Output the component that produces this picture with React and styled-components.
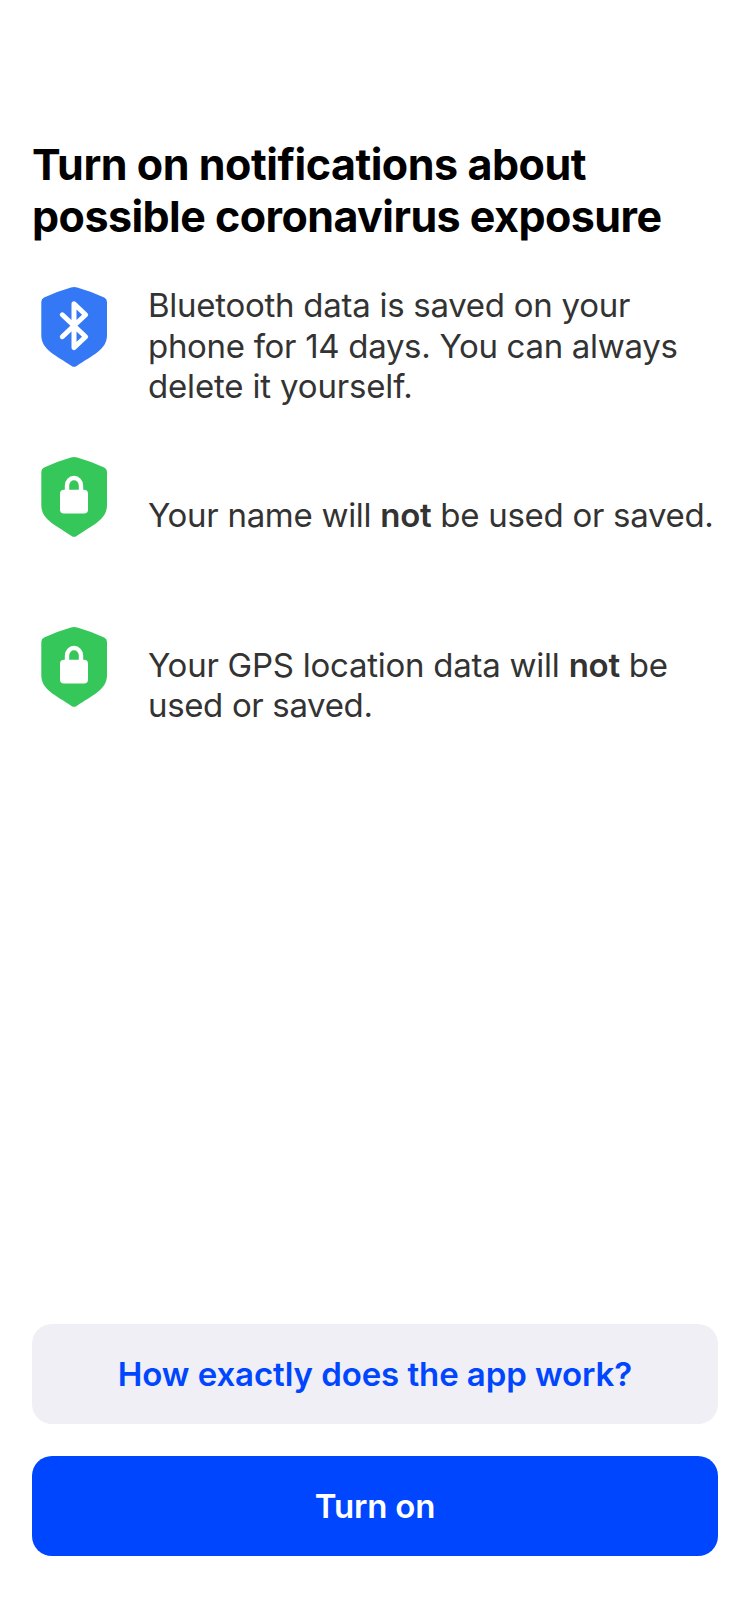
import React from "react";
import styled, { createGlobalStyle } from "styled-components";

const GlobalStyle = createGlobalStyle`
  body { margin: 0; background: #fff; }
  * { box-sizing: border-box; }
`;

const Screen = styled.main`
  display: flex;
  flex-direction: column;
  width: 750px;
  height: 1624px;
  padding: 138px 32px 68px;
  background: #fff;
  font-family: Inter, "Liberation Sans", sans-serif;
`;

const Title = styled.h1`
  margin: 0;
  color: #000;
  font-size: 43px;
  font-weight: 700;
  line-height: 52px;
  white-space: nowrap;
`;

const Line = styled.span`
  display: block;
  letter-spacing: ${({ $tracking }) => $tracking}px;
`;

const Features = styled.ul`
  display: flex;
  flex-direction: column;
  margin: 44px 0 0;
  padding: 0;
  list-style: none;
`;

const Feature = styled.li`
  display: grid;
  grid-template-columns: 66px 1fr;
  column-gap: 41px;
  height: 170px;
  padding-left: 9px;
`;

const ShieldIcon = styled.svg`
  width: 66px;
  height: 82px;
`;

const FeatureText = styled.p`
  margin: ${({ $offset }) => $offset}px 0 0;
  color: #333;
  font-size: 33px;
  font-weight: 400;
  line-height: 40.5px;
  white-space: nowrap;

  strong { font-weight: 600; }
`;

const Actions = styled.div`
  display: flex;
  flex-direction: column;
  gap: 32px;
  margin-top: auto;
`;

const Button = styled.button`
  height: 100px;
  padding: 0;
  border: 0;
  border-radius: 20px;
  background: ${({ $primary }) => ($primary ? "#0046ff" : "#f0eff5")};
  color: ${({ $primary }) => ($primary ? "#fff" : "#0046ff")};
  font-family: inherit;
  font-size: 33px;
  font-weight: 600;
  line-height: 40px;
  letter-spacing: ${({ $primary }) => ($primary ? -0.2 : -0.08)}px;
`;

function Shield({ color, children }) {
  return (
    <ShieldIcon viewBox="11 11 66 82" aria-hidden="true">
      <path
        fill={color}
        d="M41 12.6Q44.1 11.2 47.2 12.6Q61 16.6 74.2 22.4Q77 23.8 77 27V60C77 75 62.5 80 46.6 91Q44.1 92.7 41.6 91C25.8 80 11.3 75 11.3 60V27Q11.3 23.8 14.1 22.4Q27.2 16.6 41 12.6Z"
      />
      {children}
    </ShieldIcon>
  );
}

function BluetoothShield() {
  return (
    <Shield color="#3478f6">
      <path
        d="M32.3 39.8 55.6 61.7 44 72.6V28.8L55.6 39.8 32.3 61.7"
        fill="none"
        stroke="#fff"
        strokeWidth="5"
        strokeLinecap="round"
        strokeLinejoin="round"
      />
    </Shield>
  );
}

function LockShield() {
  return (
    <Shield color="#35c75a">
      <rect x="30" y="44.8" width="28" height="23.8" rx="4" fill="#fff" />
      <path d="M37 47V40.5a7 7.5 0 0 1 14 0V47" fill="none" stroke="#fff" strokeWidth="4.4" />
    </Shield>
  );
}

export default function App() {
  return (
    <>
      <GlobalStyle />
      <Screen>
        <Title>
          <Line $tracking={-0.46}>Turn on notifications about</Line>
          <Line $tracking={-0.55}>possible coronavirus exposure</Line>
        </Title>
        <Features>
          <Feature>
            <BluetoothShield />
            <FeatureText $offset={-1}>
              <Line $tracking={-0.27}>Bluetooth data is saved on your</Line>
              <Line $tracking={-0.31}>phone for 14 days. You can always</Line>
              <Line $tracking={-0.17}>delete it yourself.</Line>
            </FeatureText>
          </Feature>
          <Feature>
            <LockShield />
            <FeatureText $offset={39}>
              <Line $tracking={-0.29}>
                Your name will <strong>not</strong> be used or saved.
              </Line>
            </FeatureText>
          </Feature>
          <Feature>
            <LockShield />
            <FeatureText $offset={18.5}>
              <Line $tracking={-0.25}>
                Your GPS location data will <strong>not</strong> be
              </Line>
              <Line $tracking={-0.35}>used or saved.</Line>
            </FeatureText>
          </Feature>
        </Features>
        <Actions>
          <Button type="button">How exactly does the app work?</Button>
          <Button type="button" $primary>
            Turn on
          </Button>
        </Actions>
      </Screen>
    </>
  );
}
